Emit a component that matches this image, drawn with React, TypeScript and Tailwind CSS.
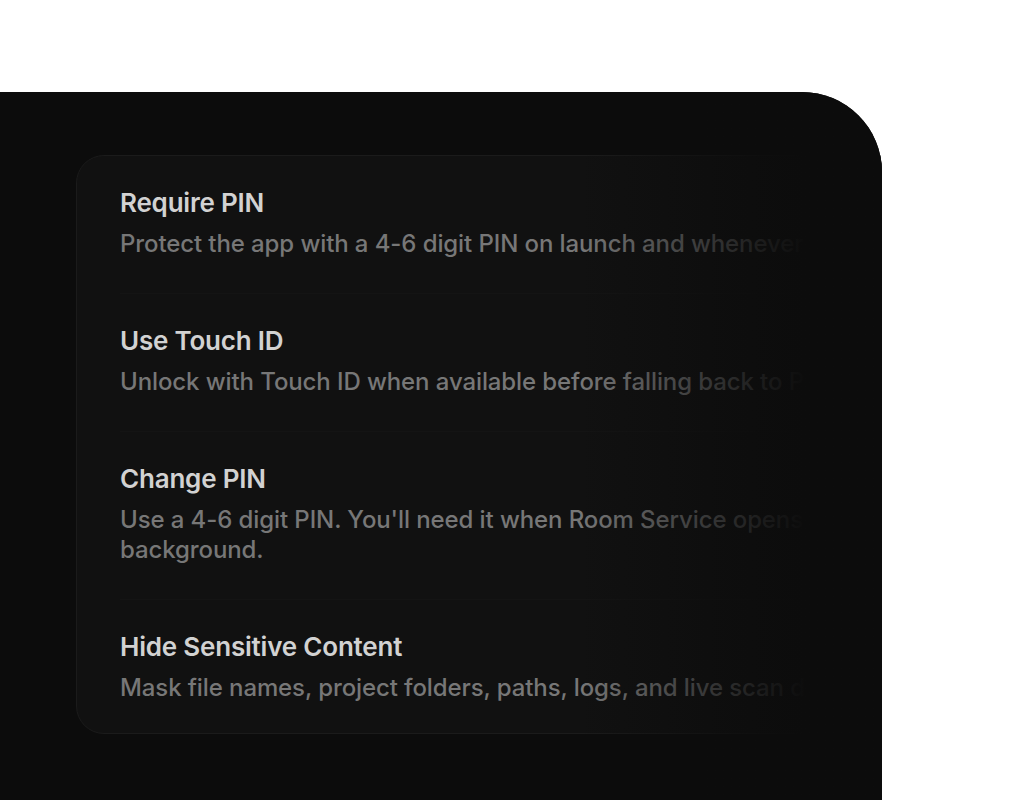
const rows = [
  {
    title: 'Require PIN',
    body: 'Protect the app with a 4-6 digit PIN on launch and whenever idle.',
  },
  {
    title: 'Use Touch ID',
    body: 'Unlock with Touch ID when available before falling back to PIN.',
  },
  {
    title: 'Change PIN',
    body: "Use a 4-6 digit PIN. You'll need it when Room Service opens in the background.",
  },
  {
    title: 'Hide Sensitive Content',
    body: 'Mask file names, project folders, paths, logs, and live scan details.',
  },
];

export default function App() {
  return (
    <div className="min-h-screen bg-white pt-[92px] font-['Inter','Noto_Sans',sans-serif]">
      {/* dark panel */}
      <div className="relative h-[708px] w-[882px] overflow-hidden rounded-tr-[80px] bg-[#0c0c0c] pl-[76px] pt-[63px]">
        {/* settings card */}
        <div className="w-[857px] rounded-[28px] border border-[#1b1b1b] bg-[#111111] px-[43px]">
          {rows.map((row, i) => (
            <div
              key={row.title}
              className={
                i < rows.length - 1
                  ? 'border-b border-[#141414] pt-[31px] pb-[34px]'
                  : 'pt-[31px] pb-[30px]'
              }
            >
              <div className="text-[26px] leading-[32px] font-semibold tracking-[-0.2px] text-[#d2d2d2]">
                {row.title}
              </div>
              <div className="mt-[10px] text-[24px] leading-[30px] font-medium tracking-[-0.1px] text-[#777777]">
                {row.body}
              </div>
            </div>
          ))}
        </div>
        {/* right fade */}
        <div className="pointer-events-none absolute top-0 right-0 bottom-0 left-[580px] bg-gradient-to-r from-transparent via-[#0c0c0c]/85 via-60% to-[#0c0c0c] to-75%" />
      </div>
    </div>
  );
}
